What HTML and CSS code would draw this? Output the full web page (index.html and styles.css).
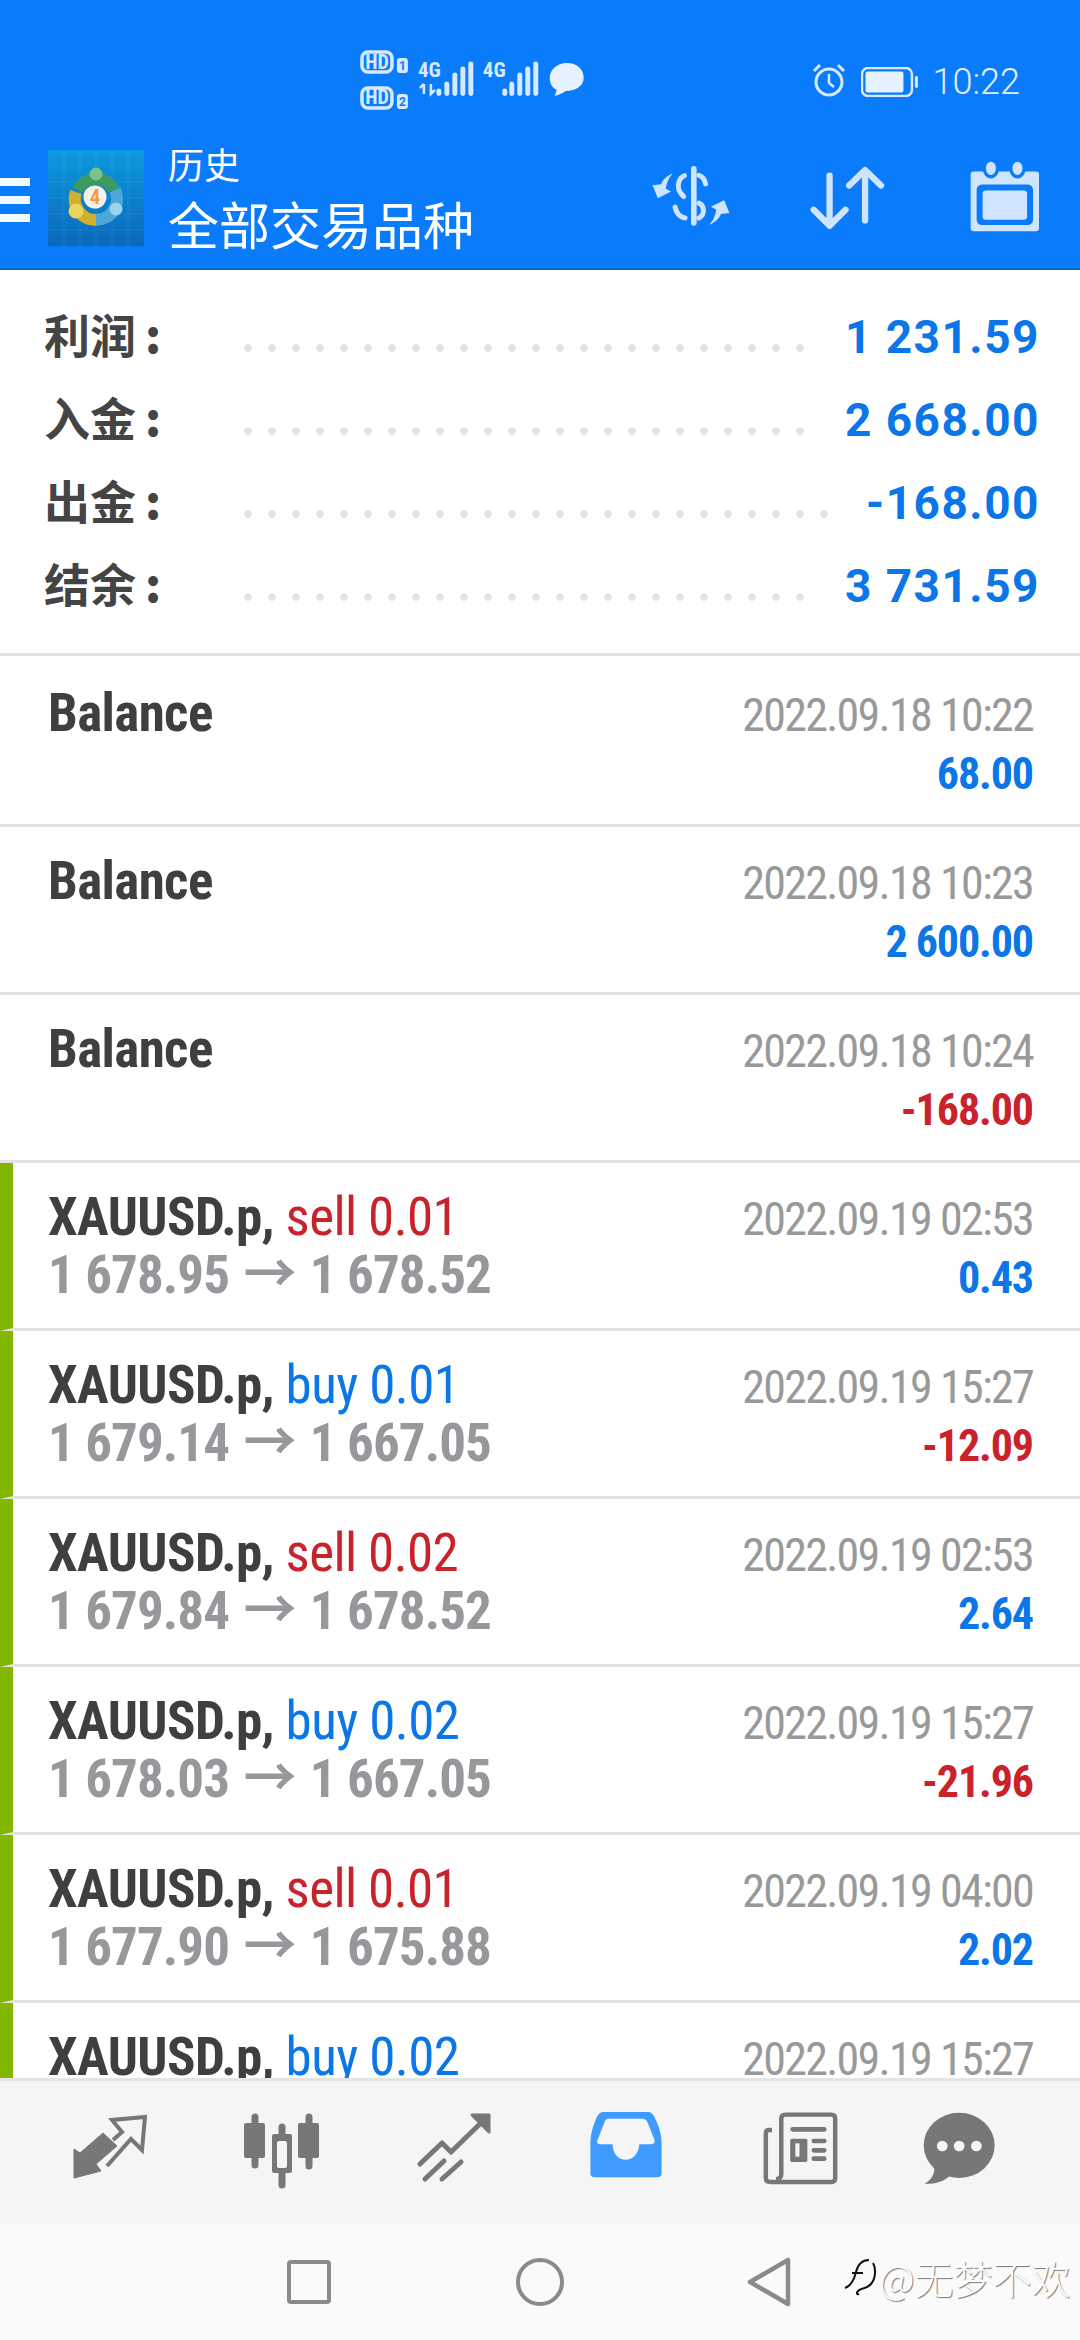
FILE: index.html
```html
<!DOCTYPE html>
<html lang="zh-CN">
<head>
    <meta charset="UTF-8">
    <meta name="viewport" content="width=device-width, initial-scale=1.0">
    <title>历史</title>
    <link rel="stylesheet" href="styles.css">
</head>
<body>
    <header class="top">
        <div class="status-bar">
            <svg class="status-left" viewBox="340 30 260 90" width="260" height="90">
                <g fill="none" stroke="#d6e9ff" stroke-width="3.500">
                    <rect x="362" y="52" width="30" height="20" rx="6"/>
                    <rect x="362" y="88" width="30" height="20" rx="6"/>
                </g>
                <text class="st-hd" x="377" y="68.500">HD</text>
                <text class="st-hd" x="377" y="104.500">HD</text>
                <rect x="397" y="58" width="11" height="15" rx="3" fill="#d6e9ff"/>
                <rect x="397" y="94" width="11" height="15" rx="3" fill="#d6e9ff"/>
                <text class="st-num" x="402.500" y="70">1</text>
                <text class="st-num" x="402.500" y="106">2</text>
                <text class="st-4g" x="429.500" y="77">4G</text>
                <text class="st-4g" x="494.500" y="77">4G</text>
                <path d="M424 94V84M420 88l4-4M431 84V94l4-4" fill="none" stroke="#d6e9ff" stroke-width="2.500"/>
                <g fill="none" stroke="#d6e9ff" stroke-width="5" stroke-linecap="round">
                    <path d="M439 91v2.500M447 84v9.500M455 75v18.500M463 69v24.500M471 64v29.500"/>
                    <path d="M505 91v2.500M512 84v9.500M520 75v18.500M528 69v24.500M536 64v29.500"/>
                </g>
                <path d="M567 63c-10 0-17 7-17 15 0 6 3 10 7 12l-2 6c5-1 8-3 11-5 10 0 18-5 18-13 0-9-7-15-17-15z" fill="#e6f2ff"/>
            </svg>
            <svg class="status-alarm" viewBox="0 0 36 36" width="36" height="36">
                <circle cx="18" cy="20" r="13" fill="none" stroke="#d6e9ff" stroke-width="3"/>
                <path d="M18 12v9l5 4" fill="none" stroke="#d6e9ff" stroke-width="2.500"/>
                <path d="M3 9l6-6M33 9l-6-6" fill="none" stroke="#d6e9ff" stroke-width="3"/>
            </svg>
            <svg class="status-battery" viewBox="0 0 58 30" width="58" height="30">
                <rect x="1" y="1" width="50" height="28" rx="6" fill="none" stroke="#d6e9ff" stroke-width="2.500"/>
                <rect x="4.500" y="4.500" width="38" height="21" rx="2" fill="#e6f2ff"/>
                <rect x="54" y="9" width="3" height="12" rx="1.500" fill="#d6e9ff"/>
            </svg>
            <span class="clock">10:22</span>
        </div>
        <div class="toolbar">
            <div class="burger"><i></i><i></i><i></i></div>
            <svg class="logo" viewBox="0 0 96 96" width="96" height="96">
                <defs>
                    <linearGradient id="logoBg" x1="0" y1="0" x2="0" y2="1">
                        <stop offset="0" stop-color="#0c9ae0"/>
                        <stop offset="1" stop-color="#0b68bb"/>
                    </linearGradient>
                </defs>
                <rect width="96" height="96" fill="url(#logoBg)"/>
                <path d="M16 0v96M32 0v96M48 0v96M64 0v96M80 0v96M0 16h96M0 32h96M0 48h96M0 64h96M0 80h96" stroke="#fff" stroke-opacity=".07"/>
                <g fill="none" stroke-width="12">
                    <path d="M67 40A21 21 0 0 1 48 70" stroke="#4fa6d8"/>
                    <path d="M48 70A21 21 0 0 1 28 42" stroke="#cfae30"/>
                    <path d="M30 40A20 20 0 0 1 66 40" stroke="#3f9a62"/>
                </g>
                <circle cx="48" cy="24" r="6.500" fill="#79c488"/>
                <circle cx="28" cy="61" r="7.500" fill="#ecd55a"/>
                <circle cx="68" cy="59" r="6.500" fill="#9ad4ee"/>
                <circle cx="47" cy="47" r="11.500" fill="#f6f1ea"/>
                <text class="logo-num" x="47" y="54">4</text>
            </svg>
            <div class="titles">
                <div class="title-small">历史</div>
                <div class="title-big">全部交易品种</div>
            </div>
            <div class="tools">
                <svg class="tool-money" viewBox="60 75 240 190" width="80" height="63">
                    <rect x="180" y="78" width="17" height="180" rx="8" fill="#cfe4ff"/>
                    <g fill="none" stroke="#cfe4ff" stroke-width="15" stroke-linecap="round">
                        <path d="M160 107C138 118 134 150 158 170"/>
                        <path d="M204 106C214 109 221 118 224 132"/>
                        <path d="M204 190C222 197 222 226 204 235"/>
                        <path d="M132 202C136 220 146 232 162 235"/>
                    </g>
                    <path d="M125 100C100 112 92 125 90 133L64 136L80 175L120 155L104 147C106 130 112 115 125 100Z" fill="#cfe4ff"/>
                    <path d="M125 100C100 112 92 125 90 133L64 136L80 175L120 155L104 147C106 130 112 115 125 100Z" fill="#cfe4ff" transform="rotate(180 180 178)"/>
                </svg>
                <svg class="tool-sort" viewBox="530 70 235 205" width="78" height="68">
                    <g fill="none" stroke="#cfe4ff" stroke-width="19" stroke-linecap="round" stroke-linejoin="round">
                        <path d="M595 105V256M547 208L595 256L643 208"/>
                        <path d="M702 240V90M654 135L702 88L750 135"/>
                    </g>
                </svg>
                <svg class="tool-cal" viewBox="1010 60 215 220" width="72" height="73">
                    <rect x="1014" y="95" width="206" height="180" rx="10" fill="#cfe4ff"/>
                    <ellipse cx="1075" cy="88" rx="24" ry="28" fill="#0a7cfb"/>
                    <ellipse cx="1155" cy="88" rx="24" ry="28" fill="#0a7cfb"/>
                    <ellipse cx="1075" cy="85" rx="15" ry="20" fill="#cfe4ff"/>
                    <ellipse cx="1155" cy="85" rx="15" ry="20" fill="#cfe4ff"/>
                    <rect x="1032" y="134" width="170" height="122" rx="16" fill="#0a7cfb"/>
                    <rect x="1050" y="152" width="134" height="88" rx="10" fill="#cfe4ff"/>
                </svg>
            </div>
        </div>
    </header>

    <section class="summary">
        <div class="sum-row"><span class="sum-label">利润<b>:</b></span><span class="sum-dots"></span><span class="sum-value">1 231.59</span></div>
        <div class="sum-row"><span class="sum-label">入金<b>:</b></span><span class="sum-dots"></span><span class="sum-value">2 668.00</span></div>
        <div class="sum-row"><span class="sum-label">出金<b>:</b></span><span class="sum-dots"></span><span class="sum-value">-168.00</span></div>
        <div class="sum-row"><span class="sum-label">结余<b>:</b></span><span class="sum-dots"></span><span class="sum-value">3 731.59</span></div>
    </section>

    <main class="deals">
        <div class="deal">
            <div class="line"><span class="name">Balance</span><span class="date">2022.09.18 10:22</span></div>
            <div class="line"><span class="price">&nbsp;</span><span class="amount up">68.00</span></div>
        </div>
        <div class="deal">
            <div class="line"><span class="name">Balance</span><span class="date">2022.09.18 10:23</span></div>
            <div class="line"><span class="price">&nbsp;</span><span class="amount up">2 600.00</span></div>
        </div>
        <div class="deal">
            <div class="line"><span class="name">Balance</span><span class="date">2022.09.18 10:24</span></div>
            <div class="line"><span class="price">&nbsp;</span><span class="amount down">-168.00</span></div>
        </div>
        <div class="deal trade">
            <div class="line"><span class="name">XAUUSD.p, <em class="sell">sell 0.01</em></span><span class="date">2022.09.19 02:53</span></div>
            <div class="line"><span class="price">1 678.95 <i>→</i> 1 678.52</span><span class="amount up">0.43</span></div>
        </div>
        <div class="deal trade">
            <div class="line"><span class="name">XAUUSD.p, <em class="buy">buy 0.01</em></span><span class="date">2022.09.19 15:27</span></div>
            <div class="line"><span class="price">1 679.14 <i>→</i> 1 667.05</span><span class="amount down">-12.09</span></div>
        </div>
        <div class="deal trade">
            <div class="line"><span class="name">XAUUSD.p, <em class="sell">sell 0.02</em></span><span class="date">2022.09.19 02:53</span></div>
            <div class="line"><span class="price">1 679.84 <i>→</i> 1 678.52</span><span class="amount up">2.64</span></div>
        </div>
        <div class="deal trade">
            <div class="line"><span class="name">XAUUSD.p, <em class="buy">buy 0.02</em></span><span class="date">2022.09.19 15:27</span></div>
            <div class="line"><span class="price">1 678.03 <i>→</i> 1 667.05</span><span class="amount down">-21.96</span></div>
        </div>
        <div class="deal trade">
            <div class="line"><span class="name">XAUUSD.p, <em class="sell">sell 0.01</em></span><span class="date">2022.09.19 04:00</span></div>
            <div class="line"><span class="price">1 677.90 <i>→</i> 1 675.88</span><span class="amount up">2.02</span></div>
        </div>
        <div class="deal trade">
            <div class="line"><span class="name">XAUUSD.p, <em class="buy">buy 0.02</em></span><span class="date">2022.09.19 15:27</span></div>
        </div>
    </main>

    <nav class="tabs">
        <div class="tab">
            <svg viewBox="70 75 80 72" width="80" height="72">
                <path d="M74 142V113L80 117L103 97L117 110L96 128L101 135Z" fill="#777" stroke="#777" stroke-width="1" stroke-linejoin="round"/>
                <path d="M113 104L122 96L112 84L145 81L142 114L131 103L107 130" fill="none" stroke="#777" stroke-width="4"/>
            </svg>
        </div>
        <div class="tab">
            <svg viewBox="240 70 84 80" width="84" height="80">
                <g fill="none" stroke="#777" stroke-width="7" stroke-linecap="round">
                    <path d="M255 76V124M282 86V144M309 76V125"/>
                </g>
                <rect x="244" y="82" width="21" height="35" rx="2" fill="#777"/>
                <rect x="272" y="93" width="20" height="39" rx="2" fill="#777"/>
                <rect x="298" y="82" width="21" height="35" rx="2" fill="#777"/>
                <rect x="277" y="100" width="10" height="27" rx="2" fill="#f5f5f5"/>
            </svg>
        </div>
        <div class="tab">
            <svg viewBox="415 72 80 72" width="80" height="72">
                <g fill="none" stroke="#777" stroke-width="5" stroke-linecap="round" stroke-linejoin="round">
                    <path d="M421 125L443 104L452 113L486 80"/>
                    <path d="M426 140L445 122M443 140L462 123"/>
                </g>
                <path d="M473 76H490V93Z" fill="#777" stroke="#777" stroke-width="3" stroke-linejoin="round"/>
            </svg>
        </div>
        <div class="tab">
            <svg viewBox="140 225 222 205" width="76" height="68" preserveAspectRatio="none">
                <path d="M185 228H315Q328 228 335 245C350 275 355 300 355 325V412Q355 425 342 425H160Q147 425 147 412V325C147 300 152 275 165 245Q172 228 185 228Z" fill="#3f9bff"/>
                <path d="M200 248H300Q310 248 315 262L335 315Q335 325 325 325H290C288 355 270 372 250 372C230 372 212 355 212 325H175Q165 325 167 315L187 262Q190 248 200 248Z" fill="#f5f5f5"/>
            </svg>
        </div>
        <div class="tab tab-news">
            <svg viewBox="640 215 230 225" width="79" height="75" preserveAspectRatio="none">
                <path d="M672 272H662Q654 272 654 284V415Q654 428 668 428H845Q856 428 856 416V238Q856 226 845 226H712Q699 226 699 238V405Q699 418 684 420" fill="none" stroke="#777" stroke-width="13"/>
                <g fill="none" stroke="#777" stroke-width="14" stroke-linecap="round">
                    <path d="M732 270H824M794 305H824M794 333H824M794 358H824"/>
                </g>
                <rect x="725" y="298" width="50" height="70" rx="5" fill="#777"/>
                <rect x="740" y="312" width="12" height="40" fill="#f5f5f5"/>
            </svg>
        </div>
        <div class="tab tab-chat">
            <svg viewBox="1100 215 225 225" width="76" height="75" preserveAspectRatio="none">
                <ellipse cx="1213" cy="318" rx="105" ry="98" fill="#777"/>
                <path d="M1140 385C1140 410 1125 425 1110 433C1140 436 1170 425 1185 410Z" fill="#777"/>
                <g fill="#f5f5f5">
                    <ellipse cx="1163" cy="320" rx="16" ry="16"/>
                    <ellipse cx="1213" cy="320" rx="16" ry="16"/>
                    <ellipse cx="1264" cy="320" rx="16" ry="16"/>
                </g>
            </svg>
        </div>
    </nav>

    <footer class="navbar">
        <span class="nav-square"></span>
        <span class="nav-circle"></span>
        <svg class="nav-back" viewBox="0 0 44 50" width="44" height="50">
            <path d="M41 3V47L3 25Z" fill="none" stroke="#8a8a8a" stroke-width="4.500" stroke-linejoin="round"/>
        </svg>
        <div class="watermark">
            <svg class="wm-mark" viewBox="0 0 34 38" width="34" height="38">
                <path d="M2 30C8 28 11 22 13 14C15 6 20 2 26 2M9 15H20M30 5C33 10 33 20 28 26C24 31 18 30 15 33C13 35 14 37 16 36" fill="none" stroke="#111" stroke-width="2"/>
            </svg>
            <span>@无梦不欢</span>
        </div>
    </footer>
</body>
</html>
```

FILE: styles.css
```css
* {
    box-sizing: border-box;
}

html,
body {
    margin: 0;
    padding: 0;
}

body {
    width: 1080px;
    height: 2340px;
    display: flex;
    flex-direction: column;
    overflow: hidden;
    background-color: #fff;
    font-family: Roboto, "Noto Sans CJK SC", sans-serif;
    font-stretch: 75%;
}

/* header */
.top {
    height: 270px;
    background-color: #0a7cfb;
    border-bottom: 2px solid #0a66c8;
    color: #fff;
}

.status-bar {
    height: 130px;
    padding: 30px 60px 0 340px;
    display: flex;
    align-items: flex-start;
}

.status-alarm {
    margin: 32px 0 0 211px;
}

.status-battery {
    margin: 37px 0 0 14px;
}

.clock {
    margin: 30px 0 0 14px;
    font-size: 36px;
    line-height: 44px;
    font-weight: 300;
    font-stretch: 100%;
    color: #e2f0ff;
}

.st-hd {
    font: 700 condensed 20px Roboto, sans-serif;
    fill: #d6e9ff;
    text-anchor: middle;
}

.st-num {
    font: 700 12px Roboto, sans-serif;
    fill: #0a7cfb;
    text-anchor: middle;
}

.st-4g {
    font: 700 condensed 21px Roboto, sans-serif;
    fill: #d6e9ff;
    text-anchor: middle;
}

.toolbar {
    height: 138px;
    display: flex;
    align-items: flex-start;
}

.burger {
    width: 30px;
    margin-top: 48px;
    display: flex;
    flex-direction: column;
    gap: 10px;
}

.burger i {
    display: block;
    height: 8px;
    background-color: #f2f8ff;
}

.logo {
    margin: 20px 0 0 18px;
}

.logo-num {
    font: 700 condensed 21px Roboto, sans-serif;
    fill: #ef9d47;
    text-anchor: middle;
}

.titles {
    margin-left: 24px;
    font-family: "Noto Sans CJK SC", sans-serif;
    font-stretch: 100%;
}

.title-small {
    margin-top: 9px;
    font-size: 36px;
    line-height: 48px;
}

.title-big {
    font-size: 51px;
    line-height: 66px;
    margin-top: 3px;
}

.tools {
    margin-left: auto;
    padding: 32px 39px 0 0;
    display: flex;
    align-items: flex-start;
}

.tool-money {
    margin-top: 3px;
}

.tool-sort {
    margin: 2px 0 0 77px;
}

.tool-cal {
    margin: -2px 0 0 83px;
}

/* account totals */
.summary {
    height: 386px;
    padding-top: 24px;
    border-bottom: 3px solid #e4e4e4;
}

.sum-row {
    height: 83px;
    padding: 0 40px 0 44px;
    display: flex;
    align-items: center;
}

.sum-label {
    width: 192px;
    margin-top: -6px;
    font-family: "Noto Sans CJK SC", sans-serif;
    font-stretch: 100%;
    font-size: 46px;
    font-weight: 700;
    color: #444;
}

.sum-label b {
    margin-left: 9px;
}

.sum-dots {
    flex: 1;
    height: 8px;
    margin: 24px 30px 0 0;
    background-image: radial-gradient(circle, #e3e3e3 3.5px, transparent 4px);
    background-size: 24px 8px;
    background-position: left center;
    background-repeat: repeat-x;
}

.sum-value {
    margin-top: 2px;
    font-size: 46px;
    font-weight: 700;
    font-stretch: 100%;
    letter-spacing: 1.5px;
    color: #0a76e8;
}

/* deal list */
.deals {
    flex: 1;
    min-height: 0;
    overflow: hidden;
}

.deal {
    height: 168px;
    padding: 25px 47px 0 48px;
    border-bottom: 3px solid #e4e4e4;
}

.deal:first-child {
    height: 171px;
    padding-top: 28px;
}

.deal.trade {
    border-left: 13px solid #82b600;
    padding-left: 35px;
}

.line {
    height: 58px;
    display: flex;
    justify-content: space-between;
    align-items: baseline;
    line-height: 58px;
}

.name {
    font-size: 53px;
    font-weight: 700;
    letter-spacing: -0.6px;
    color: #3f3f3f;
}

.name em {
    font-style: normal;
    font-weight: 400;
}

.sell {
    color: #c9222b;
}

.buy {
    color: #0a76e8;
}

.price {
    font-size: 53px;
    font-weight: 700;
    letter-spacing: -0.9px;
    color: #98989c;
}

.price i {
    margin: 0 3px;
    font-style: normal;
}

.date {
    font-size: 46px;
    letter-spacing: -1.7px;
    color: #999;
}

.amount {
    font-size: 44px;
    font-weight: 700;
    letter-spacing: -1.1px;
}

.up {
    color: #0a76e8;
}

.down {
    color: #c9222b;
}

/* bottom tabs */
.tabs {
    height: 146px;
    padding: 30px 48px 0 24px;
    background-color: #f5f5f5;
    border-top: 3px solid #e4e4e4;
    display: grid;
    grid-template-columns: repeat(5, 172px) 1fr;
    align-items: start;
    justify-items: center;
}

.tab-news {
    margin-left: 5px;
}

.tab-chat {
    margin-left: 2px;
}

.navbar {
    height: 116px;
    position: relative;
    background-color: #fafafa;
    display: flex;
    align-items: center;
}

.nav-square {
    width: 44px;
    height: 44px;
    margin-left: 287px;
    border: 4.5px solid #8a8a8a;
    border-radius: 4px;
}

.nav-circle {
    width: 48px;
    height: 48px;
    margin-left: 185px;
    border: 4.5px solid #8a8a8a;
    border-radius: 50%;
}

.nav-back {
    margin-left: 183px;
}

.watermark {
    position: absolute;
    left: 843px;
    top: 25px;
    display: flex;
    align-items: center;
    gap: 2px;
    font-family: "Noto Sans CJK SC", sans-serif;
    font-stretch: 100%;
    font-size: 39px;
    font-weight: 300;
    line-height: 56px;
    color: #fff;
    text-shadow: 1px 1px 1px #777;
    white-space: nowrap;
}
```
